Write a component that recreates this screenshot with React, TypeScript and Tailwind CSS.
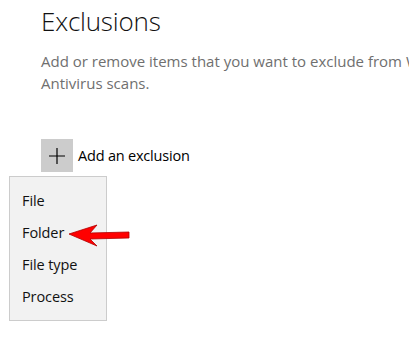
import React from "react";

const font = { fontFamily: '"Segoe UI", "Open Sans", "Noto Sans", sans-serif' };

export default function App() {
  return (
    <div
      className="relative w-[409px] h-[339px] overflow-hidden bg-white text-black"
      style={font}
    >
      <div className="pl-[41px] pt-[4px]">
        <h1 className="text-[26px] font-light leading-[34px] tracking-[-0.2px] text-[#111]">Exclusions</h1>
        <div className="mt-[12px] text-[15px] leading-[22px] text-[#6f6f6f] whitespace-nowrap">
          <div>Add or remove items that you want to exclude from Windows Defender</div>
          <div>Antivirus scans.</div>
        </div>
        <div className="mt-[45px] flex items-center">
          <div className="w-[32px] h-[33px] bg-[#cccccc] flex items-center justify-center">
            <svg width="16" height="16" viewBox="0 0 16 16">
              <path d="M0 8H16M8 0V16" stroke="#000" strokeWidth="1.2" fill="none" />
            </svg>
          </div>
          <span className="ml-[5px] text-[14.5px] leading-[20px] tracking-[-0.2px]">Add an exclusion</span>
        </div>
      </div>

      <div className="absolute left-[9px] top-[176px] w-[98px] h-[145px] border border-[#cccccc] bg-[#f2f2f2] pt-[8px]">
        {["File", "Folder", "File type", "Process"].map((t) => (
          <div key={t} className="h-[32px] pl-[12px] flex items-center text-[14.5px] tracking-[-0.1px] text-[#111]">
            {t}
          </div>
        ))}
      </div>

      <svg className="absolute left-0 top-0" width="409" height="339" viewBox="0 0 409 339">
        <polygon
          points="69,234 97,225 90,233 129,232 129,238 90,239 97,246"
          fill="#ff0000"
          stroke="#b00000"
          strokeWidth="0.8"
          strokeLinejoin="round"
        />
      </svg>
    </div>
  );
}
